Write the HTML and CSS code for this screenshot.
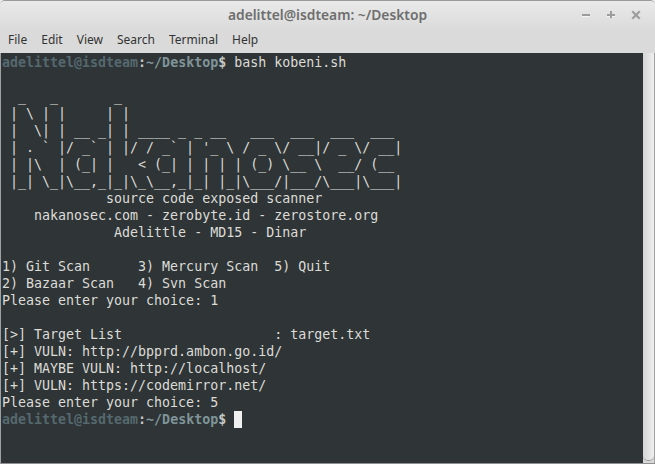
FILE: index.html
```html
<!DOCTYPE html>
<html lang="en">
<head>
<meta charset="utf-8">
<title>adelittel@isdteam: ~/Desktop</title>
<link rel="stylesheet" href="styles.css">
</head>
<body>
<div class="window">
  <header class="titlebar">
    <div class="title">adelittel@isdteam: ~/Desktop</div>
    <div class="controls">
      <svg class="ctl" viewBox="0 0 12 12"><rect x="2" y="5" width="8" height="2" fill="#9c9c9c"/><rect x="2" y="7" width="8" height="1" fill="#f4f4f4"/></svg>
      <svg class="ctl" viewBox="0 0 12 12"><path d="M2 7h8v1H7v1H5V8H2z" fill="#f4f4f4"/><path d="M5 2h2v3h3v2H7v2H5V7H2V5h3z" fill="#9c9c9c"/></svg>
      <svg class="ctl" viewBox="0 0 12 12"><path d="M1.500 3 3 1.500 6 4.500 9 1.500 10.500 3 7.500 6 10.500 9 9 10.500 6 7.500 3 10.500 1.500 9 4.500 6z" fill="#9c9c9c"/></svg>
    </div>
  </header>
  <nav class="menubar">
    <span class="menu">File</span><span class="menu">Edit</span><span class="menu">View</span><span class="menu">Search</span><span class="menu">Terminal</span><span class="menu">Help</span>
  </nav>
  <main class="body">
<pre class="term"><span class="u">adelittel@isdteam</span><span class="c">:</span><span class="p">~/Desktop</span><span class="c">$</span> bash kobeni.sh

  _   _       _
 | \ | |     | |
 |  \| | __ _| | ____ _ _ __   ___  ___  ___  ___
 | . ` |/ _` | |/ / _` | '_ \ / _ \/ __|/ _ \/ __|
 | |\  | (_| |   < (_| | | | | (_) \__ \  __/ (__
 |_| \_|\__,_|_|\_\__,_|_| |_|\___/|___/\___|\___|
             source code exposed scanner
    nakanosec.com - zerobyte.id - zerostore.org
              Adelittle - MD15 - Dinar

1) Git Scan      3) Mercury Scan  5) Quit
2) Bazaar Scan   4) Svn Scan
Please enter your choice: 1

[&gt;] Target List                   : target.txt
[+] VULN: http://bpprd.ambon.go.id/
[+] MAYBE VULN: http://localhost/
[+] VULN: https://codemirror.net/
Please enter your choice: 5
<span class="u">adelittel@isdteam</span><span class="c">:</span><span class="p">~/Desktop</span><span class="c">$</span> <span class="cursor"> </span></pre>
    <div class="scrollbar"><div class="thumb"></div></div>
  </main>
</div>
</body>
</html>
```
FILE: styles.css
```css
html, body { margin: 0; padding: 0; width: 655px; height: 464px; overflow: hidden; background: #ececec; }
.window { width: 655px; height: 464px; display: flex; flex-direction: column; overflow: hidden; border-radius: 5px 5px 0 0; border-top: 1px solid #9a9a9a; box-sizing: border-box; font-family: "Noto Sans", "Open Sans", sans-serif; }
.titlebar { height: 27px; flex: none; display: flex; align-items: center; justify-content: center; position: relative; background: linear-gradient(#e9e9e9, #dcdcdc); }
.title { font-size: 13.800px; font-weight: 600; color: #6e6e6e; }
.controls { position: absolute; right: 13px; top: 8px; display: flex; gap: 13px; }
.ctl { width: 12px; height: 12px; display: block; }
.menubar { height: 25px; flex: none; display: flex; align-items: center; padding: 0 0 2px 8px; box-sizing: border-box; gap: 14px; background: #dadada; font-size: 12px; color: #333; }
.body { flex: 1; display: flex; min-height: 0; background: #2f3437; border-left: 1px solid #a0a0a0; border-right: 1px solid #a0a0a0; border-bottom: 1px solid #8f8f8f; }
.term { flex: 1; margin: 0; padding: 1px 0 0 1px; font-family: "DejaVu Sans Mono", monospace; font-size: 13.300px; line-height: 17px; color: #dcdcd6; overflow: hidden; }
.u { color: #55696e; font-weight: 700; }
.c { color: #c5c9c5; font-weight: 700; }
.p { color: #7f9498; font-weight: 700; }
.cursor { display: inline-block; width: 8px; height: 17px; background: #f0f0f0; vertical-align: top; }
.scrollbar { width: 11px; flex: none; background: #d8d8d8; display: flex; }
.thumb { flex: 1; margin-bottom: 2px; background: linear-gradient(90deg, #d5d5d5, #efefef); border-radius: 0 0 5px 5px; border-bottom: 1px solid #9a9a9a; }
```
